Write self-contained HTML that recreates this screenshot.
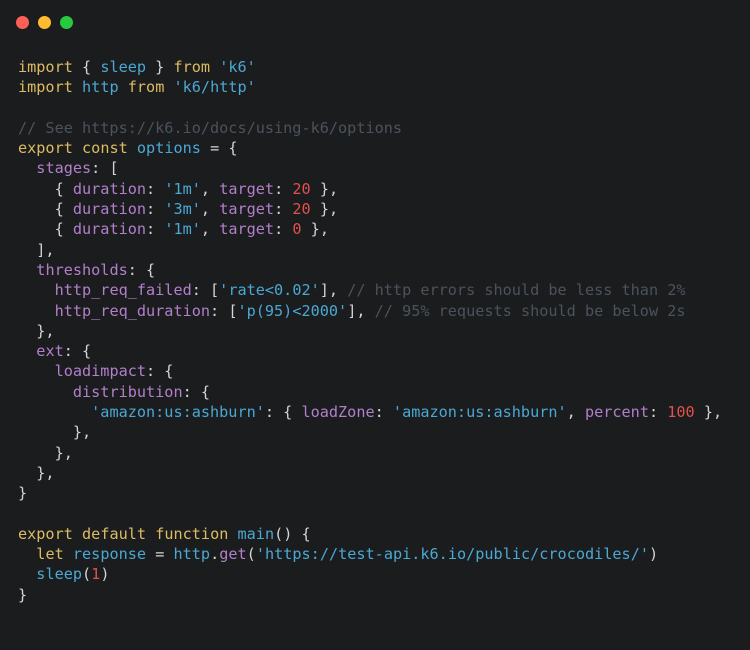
<!DOCTYPE html>
<html><head><meta charset="utf-8"><style>
html,body{margin:0;padding:0;background:#1b1c1e;}
body{width:750px;height:650px;overflow:hidden;position:relative;}
.d{position:absolute;top:16px;width:13px;height:13px;border-radius:50%;}
pre{position:absolute;left:18px;top:57px;margin:0;font-family:"DejaVu Sans Mono","Liberation Mono",monospace;font-size:15.2px;line-height:20.3px;color:#d4d4d4;}
.k{color:#dcbb62}.b{color:#4aa8d4}.p{color:#b27fcb}.n{color:#e0514c}.c{color:#4a535c}
</style></head><body>
<div class="d" style="left:16px;background:#fe5f57"></div>
<div class="d" style="left:38px;background:#febc2e"></div>
<div class="d" style="left:60px;background:#28c840"></div>
<pre><span class="k">import</span> { <span class="b">sleep</span> } <span class="k">from</span> <span class="b">'k6'</span>
<span class="k">import</span> <span class="b">http</span> <span class="k">from</span> <span class="b">'k6/http'</span>

<span class="c">// See https://k6.io/docs/using-k6/options</span>
<span class="k">export</span> <span class="k">const</span> <span class="b">options</span> = {
  <span class="p">stages</span>: [
    { <span class="p">duration</span>: <span class="b">'1m'</span>, <span class="p">target</span>: <span class="n">20</span> },
    { <span class="p">duration</span>: <span class="b">'3m'</span>, <span class="p">target</span>: <span class="n">20</span> },
    { <span class="p">duration</span>: <span class="b">'1m'</span>, <span class="p">target</span>: <span class="n">0</span> },
  ],
  <span class="p">thresholds</span>: {
    <span class="p">http_req_failed</span>: [<span class="b">'rate&lt;0.02'</span>], <span class="c">// http errors should be less than 2%</span>
    <span class="p">http_req_duration</span>: [<span class="b">'p(95)&lt;2000'</span>], <span class="c">// 95% requests should be below 2s</span>
  },
  <span class="p">ext</span>: {
    <span class="p">loadimpact</span>: {
      <span class="p">distribution</span>: {
        <span class="b">'amazon:us:ashburn'</span>: { <span class="p">loadZone</span>: <span class="b">'amazon:us:ashburn'</span>, <span class="p">percent</span>: <span class="n">100</span> },
      },
    },
  },
}

<span class="k">export</span> <span class="k">default</span> <span class="k">function</span> <span class="b">main</span>() {
  <span class="k">let</span> <span class="b">response</span> = <span class="b">http</span>.<span class="p">get</span>(<span class="b">'https://test-api.k6.io/public/crocodiles/'</span>)
  <span class="b">sleep</span>(<span class="n">1</span>)
}</pre>
</body></html>
